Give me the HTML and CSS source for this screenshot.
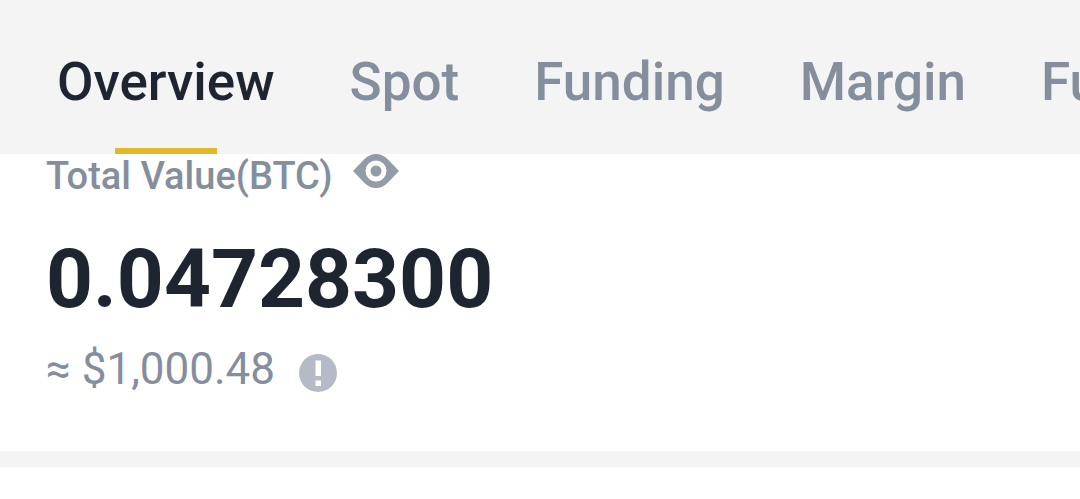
FILE: index.html
```
<!DOCTYPE html>
<html lang="en">
<head>
  <meta charset="UTF-8">
  <meta name="viewport" content="width=device-width, initial-scale=1.0">
  <title>Wallet Overview</title>
  <link rel="stylesheet" href="styles.css">
</head>
<body>
  <nav class="tabs">
    <a class="tab active" href="#overview">Overview</a>
    <a class="tab" href="#spot">Spot</a>
    <a class="tab" href="#funding">Funding</a>
    <a class="tab" href="#margin">Margin</a>
    <a class="tab" href="#futures">Futures</a>
  </nav>
  <main class="balance">
    <div class="label-row">
      <h1 class="label">Total Value(BTC)</h1>
      <button class="icon-button" type="button" aria-label="Hide balance">
        <svg width="46" height="34" viewBox="0 0 46 34">
          <path fill="#929ba6" fill-rule="evenodd" d="M0 17L11 5.500Q16.500 0 23 0T35 5.500L46 17L35 28.500Q29.500 34 23 34T11 28.500ZM23 6.500a10.500 10.500 0 1 0 0 21a10.500 10.500 0 1 0 0-21Z"/>
          <circle cx="23" cy="17" r="5.500" fill="#929ba6"/>
        </svg>
      </button>
    </div>
    <p class="amount">0.04728300</p>
    <div class="fiat-row">
      <p class="fiat">≈ $1,000.48</p>
      <button class="icon-button" type="button" aria-label="About this value">
        <svg width="38" height="38" viewBox="0 0 38 38">
          <circle cx="19" cy="19" r="19" fill="#b5bbc6"/>
          <path fill="#fff" d="M16.500 6.500h5.500v15.500h-5.500ZM16.500 26.500h5.500v5.500h-5.500Z"/>
        </svg>
      </button>
    </div>
  </main>
</body>
</html>
```
FILE: styles.css
```
* {
  box-sizing: border-box;
}
body {
  margin: 0;
  font-family: Roboto, "Liberation Sans", sans-serif;
  background: #fff;
  color: #1e2530;
}
.tabs {
  display: flex;
  gap: 75px;
  padding: 50px 0 0 57px;
  background: #f4f4f4;
  overflow: hidden;
}
.tab {
  flex: none;
  display: flex;
  flex-direction: column;
  align-items: center;
  font-size: 53px;
  font-weight: 500;
  line-height: 64px;
  color: #848e9c;
  text-decoration: none;
}
.tab::after {
  content: "";
  width: 102px;
  height: 6px;
  margin-top: 34px;
}
.tab.active {
  color: #1e2530;
}
.tab.active::after {
  background: #e4b829;
}
.balance {
  padding: 0 46px 59px;
  border-bottom: 16px solid #f4f4f4;
}
.label-row,
.fiat-row {
  display: flex;
  color: #848e9c;
}
.label-row {
  align-items: flex-start;
  gap: 20px;
}
.fiat-row {
  align-items: flex-end;
  gap: 24px;
}
.label {
  margin: 0;
  font-size: 38px;
  font-weight: 500;
  line-height: 44px;
}
.icon-button {
  display: flex;
  padding: 0;
  border: 0;
  background: none;
  cursor: pointer;
}
.amount {
  margin: 31px 0 17px;
  font-size: 82px;
  font-weight: 700;
  line-height: 100px;
}
.fiat {
  margin: 0;
  font-size: 44px;
  line-height: 46px;
}
```
